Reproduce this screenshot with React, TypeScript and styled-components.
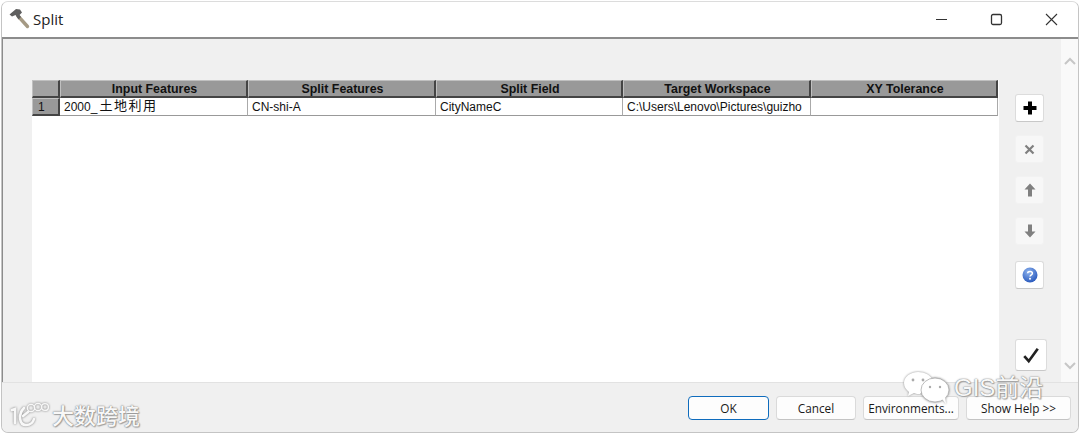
import styled, { createGlobalStyle } from 'styled-components'

const GlobalStyle = createGlobalStyle`
    html, body {
        margin: 0;
        padding: 0;
        background: #fff;
    }
    #root {
        width: 1080px;
        height: 435px;
        overflow: hidden;
    }
`;

const Page = styled.div`
    position: relative;
    width: 1080px;
    height: 435px;
    padding: 1px 1px 2px 1px;
    box-sizing: border-box;
    font-family: "Liberation Sans", Arial, sans-serif;
`;

const Window = styled.div`
    height: 100%;
    display: flex;
    flex-direction: column;
    box-sizing: border-box;
    background: #f0f0f0;
    border: 1px solid #c4c4c4;
    border-top-color: #dcdcdc;
    border-radius: 7px;
    overflow: hidden;
`;

const TitleBar = styled.header`
    height: 35px;
    flex: none;
    display: flex;
    align-items: center;
    background: #fff;
    border-bottom: 2px solid #8c8c8c;
`;

const AppIcon = styled.svg`
    width: 21px;
    height: 21px;
    margin-left: 7px;
    margin-top: -2px;
`;

const Title = styled.span`
    margin-left: 3px;
    font-family: "Open Sans", "Liberation Sans", sans-serif;
    font-size: 15px;
    color: #222;
    margin-top: -1px;
`;

const WindowControls = styled.div`
    margin-left: auto;
    display: flex;
    align-items: center;
    gap: 42px;
    padding-right: 20px;
`;

const ControlIcon = styled.svg`
    width: 13px;
    height: 13px;
    stroke: #333;
    fill: none;
`;

const Body = styled.div`
    flex: 1;
    min-height: 0;
    display: flex;
    border-left: 1px solid #8c8c8c;
`;

const Main = styled.main`
    flex: none;
    width: 967px;
    margin-left: 29px;
    padding-top: 41px;
    box-sizing: border-box;
    background: linear-gradient(#f0f0f0 41px, #fff 41px);
`;

const Grid = styled.div`
    display: grid;
    grid-template-columns: 28px 188px 188px 187px 188px 187px;
    grid-template-rows: 18px 18px;
    width: 966px;
`;

const Corner = styled.div`
    background: #a2a2a2;
    border-top: 1px solid #c0c0c0;
    border-left: 1px solid #c0c0c0;
    border-right: 2px solid #444;
    border-bottom: 2px solid #444;
    box-sizing: border-box;
`;

const HeaderCell = styled.div`
    display: flex;
    align-items: center;
    justify-content: center;
    padding-left: 2px;
    box-sizing: border-box;
    background: #999;
    border-top: 1px solid #c0c0c0;
    border-left: 1px solid #c0c0c0;
    border-right: 2px solid #444;
    border-bottom: 2px solid #444;
    font-size: 12.4px;
    font-weight: 700;
    color: #111;
    white-space: nowrap;
`;

const RowHead = styled.div`
    display: flex;
    align-items: center;
    padding-left: 5px;
    box-sizing: border-box;
    background: #999;
    border-top: 1px solid #c0c0c0;
    border-left: 1px solid #c0c0c0;
    border-right: 2px solid #444;
    border-bottom: 2px solid #444;
    font-size: 12px;
    color: #111;
`;

const Cell = styled.div`
    display: flex;
    align-items: center;
    padding-left: 4px;
    box-sizing: border-box;
    background: #fff;
    border-right: 1px solid #aaa;
    border-bottom: 1px solid #999;
    font-size: 12px;
    color: #111;
    white-space: nowrap;
    overflow: hidden;
    font-family: "Liberation Sans", "Noto Sans CJK SC", sans-serif;
`;

const CjkName = styled.span`
    margin-left: 2px;
    margin-top: -4px;
    font-size: 13px;
    letter-spacing: 1.5px;
`;

const Side = styled.aside`
    flex: none;
    width: 62px;
    padding: 55px 0 0 16px;
    box-sizing: border-box;
    display: flex;
    flex-direction: column;
`;

const ToolButton = styled.button<{ $off?: boolean; $top?: number }>`
    width: 29px;
    height: 28px;
    margin-top: ${(props) => props.$top ?? 13}px;
    padding: 0;
    display: flex;
    align-items: center;
    justify-content: center;
    background: ${(props) => (props.$off ? '#f7f7f7' : '#fff')};
    border: 1px solid ${(props) => (props.$off ? '#f2f2f2' : '#dcdcdc')};
    border-bottom-color: ${(props) => (props.$off ? '#f2f2f2' : '#c8c8c8')};
    border-radius: 3px;
`;

const CheckButton = styled(ToolButton)`
    width: 32px;
    height: 32px;
`;

const Scrollbar = styled.div`
    flex: 1;
    display: flex;
    flex-direction: column;
    justify-content: space-between;
    align-items: center;
    padding: 18px 0 12px;
    box-sizing: border-box;
    background: #f9f9f9;
`;

const ScrollArrow = styled.svg`
    width: 12px;
    height: 8px;
    fill: none;
    stroke: #c6c6c6;
    stroke-width: 2;
`;

const Footer = styled.footer`
    height: 50px;
    flex: none;
    display: flex;
    align-items: flex-start;
    padding: 13px 0 0 686px;
    box-sizing: border-box;
    gap: 7px;
    background: #f0f0f0;
    border-top: 1px solid #e2e2e2;
`;

const DialogButton = styled.button<{ $w: number; $primary?: boolean }>`
    width: ${(props) => props.$w}px;
    height: 24px;
    padding: 0;
    background: #fdfdfd;
    border: ${(props) => (props.$primary ? '1px solid #0f6cbd' : '1px solid #dadada')};
    border-bottom-color: ${(props) => (props.$primary ? '#0f6cbd' : '#c4c4c4')};
    border-radius: 4px;
    font-family: "Open Sans", "Liberation Sans", sans-serif;
    font-size: 11.8px;
    color: #1a1a1a;
`;

const Mark = styled.div`
    position: absolute;
    display: flex;
    align-items: center;
    color: #f8f8f8;
    line-height: 1.05;
    text-shadow: 0 0 1px #777, 0 0 2px #999, 1px 1px 1px #aaa;
    white-space: nowrap;
`;

const BrandMark = styled(Mark)`
    left: 9px;
    top: 402px;
    gap: 3px;
    font-family: "Noto Sans CJK SC", sans-serif;
    font-size: 22px;
    font-weight: 500;
`;

const WechatMark = styled(Mark)`
    left: 904px;
    top: 371px;
    gap: 2px;
    font-family: "Liberation Sans", "Noto Sans CJK SC", sans-serif;
    font-size: 24px;
`;

const columns = ['Input Features', 'Split Features', 'Split Field', 'Target Workspace', 'XY Tolerance'];

const App = () => {
    return (
        <Page>
            <GlobalStyle />
            <Window>
                <TitleBar>
                    <AppIcon viewBox="0 0 21 21">
                        <path d="M9 8 L18.5 18.5" stroke="#a59a84" strokeWidth="3.4" strokeLinecap="round" />
                        <path d="M0.5 6.5 L7 1 L11 1.5 L13 4.5 L10.5 7 L12 9 L9.5 11.5 L6.5 7 L3 8.5 Z" fill="#5f5f5f" />
                    </AppIcon>
                    <Title>Split</Title>
                    <WindowControls>
                        <ControlIcon viewBox="0 0 13 13"><path d="M1 6.5 H12" strokeWidth="1.2" /></ControlIcon>
                        <ControlIcon viewBox="0 0 13 13"><rect x="1.5" y="1.5" width="10" height="10" rx="1.5" strokeWidth="1.3" /></ControlIcon>
                        <ControlIcon viewBox="0 0 13 13"><path d="M1 1 L12 12 M12 1 L1 12" strokeWidth="1.1" /></ControlIcon>
                    </WindowControls>
                </TitleBar>
                <Body>
                    <Main>
                        <Grid>
                            <Corner />
                            {columns.map((name) => <HeaderCell key={name}>{name}</HeaderCell>)}
                            <RowHead>1</RowHead>
                            <Cell>2000_<CjkName>土地利用</CjkName></Cell>
                            <Cell>CN-shi-A</Cell>
                            <Cell>CityNameC</Cell>
                            <Cell>C:\Users\Lenovo\Pictures\guizho</Cell>
                            <Cell />
                        </Grid>
                    </Main>
                    <Side>
                        <ToolButton $top={0}>
                            <svg width="14" height="14" viewBox="0 0 14 14"><path d="M5 0.5 H9 V5 H13.5 V9 H9 V13.5 H5 V9 H0.5 V5 H5 Z" fill="#000" /></svg>
                        </ToolButton>
                        <ToolButton $off>
                            <svg width="11" height="11" viewBox="0 0 11 11"><path d="M1.5 1.5 L9.5 9.5 M9.5 1.5 L1.5 9.5" stroke="#808080" strokeWidth="2.2" /></svg>
                        </ToolButton>
                        <ToolButton $off>
                            <svg width="12" height="14" viewBox="0 0 12 14"><path d="M6 0.5 L11.5 6.5 H8 V13.5 H4 V6.5 H0.5 Z" fill="#808080" /></svg>
                        </ToolButton>
                        <ToolButton $off>
                            <svg width="12" height="14" viewBox="0 0 12 14"><path d="M6 13.5 L11.5 7.5 H8 V0.5 H4 V7.5 H0.5 Z" fill="#808080" /></svg>
                        </ToolButton>
                        <ToolButton $top={16}>
                            <svg width="16" height="16" viewBox="0 0 16 16">
                                <defs>
                                    <radialGradient id="helpBall" cx="0.4" cy="0.3" r="0.8">
                                        <stop offset="0" stopColor="#8fb4ee" />
                                        <stop offset="1" stopColor="#1d4fb8" />
                                    </radialGradient>
                                </defs>
                                <circle cx="8" cy="8" r="7.5" fill="url(#helpBall)" />
                                <path d="M5.6 6.2 C5.8 3.8 10.4 3.8 10.4 6.2 C10.4 7.8 8 7.8 8 9.6" stroke="#fff" strokeWidth="1.5" fill="none" />
                                <circle cx="8" cy="11.8" r="1" fill="#fff" />
                            </svg>
                        </ToolButton>
                        <CheckButton $top={50}>
                            <svg width="18" height="18" viewBox="0 0 16 16"><path d="M2 9 L6 13.5 L14 2.5" stroke="#222" strokeWidth="2.4" fill="none" /></svg>
                        </CheckButton>
                    </Side>
                    <Scrollbar>
                        <ScrollArrow viewBox="0 0 12 8"><path d="M1 7 L6 2 L11 7" /></ScrollArrow>
                        <ScrollArrow viewBox="0 0 12 8"><path d="M1 1 L6 6 L11 1" /></ScrollArrow>
                    </Scrollbar>
                </Body>
                <Footer>
                    <DialogButton $w={81} $primary>OK</DialogButton>
                    <DialogButton $w={80}>Cancel</DialogButton>
                    <DialogButton $w={96}>Environments...</DialogButton>
                    <DialogButton $w={105}>Show Help &gt;&gt;</DialogButton>
                </Footer>
            </Window>
            <BrandMark>
                <svg width="40" height="26" viewBox="0 0 40 26" fill="none" stroke="#f8f8f8" strokeWidth="2.6" strokeLinecap="round" style={{ filter: 'drop-shadow(0 0 1px #777)' }}>
                    <path d="M3 8 L6 7 L6 21" />
                    <path d="M15 6 C9 12 10 23 17 23 C21 23 24 21 25 17" />
                    <path d="M14 14 L19 10" />
                    <circle cx="22" cy="6" r="3.6" strokeWidth="1.4" />
                    <circle cx="29" cy="5" r="3.6" strokeWidth="1.4" />
                    <circle cx="36" cy="5" r="3.4" strokeWidth="1.4" />
                </svg>
                大数跨境
            </BrandMark>
            <WechatMark>
                <svg width="48" height="34" viewBox="0 0 48 34" style={{ filter: 'drop-shadow(0 0 1px #888)' }}>
                    <path d="M14 1 C6 1 0 6 0 12 C0 16 2 18 5 21 L4 25 L10 22 C12 23 14 23 16 23 L28 8 C26 4 21 1 14 1 Z" fill="#fff" />
                    <ellipse cx="31" cy="19" rx="14" ry="12" fill="#fff" stroke="#aaa" strokeWidth="0.8" />
                    <path d="M38 28 L42 33 L41 25 Z" fill="#fff" />
                    <circle cx="9" cy="9" r="1.4" fill="#aaa" />
                    <circle cx="19" cy="9" r="1.4" fill="#aaa" />
                    <circle cx="26" cy="16" r="1.2" fill="#aaa" />
                    <circle cx="36" cy="16" r="1.2" fill="#aaa" />
                </svg>
                GIS前沿
            </WechatMark>
        </Page>
    );
};

export default App;
